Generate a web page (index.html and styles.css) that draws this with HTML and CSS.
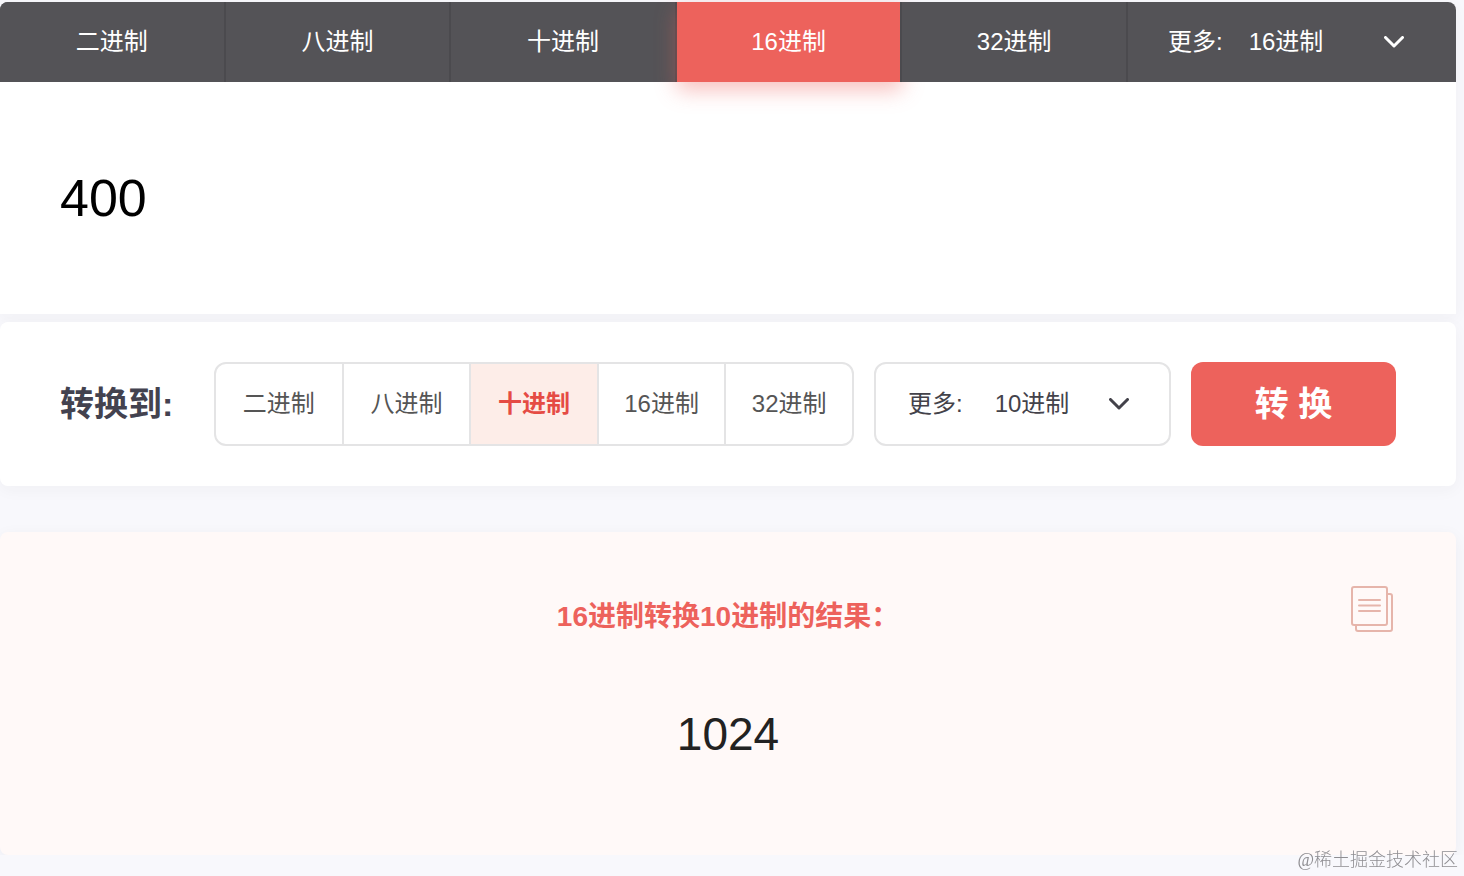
FILE: index.html
```
<!DOCTYPE html>
<html lang="zh-CN">
  <head>
    <meta charset="UTF-8" />
    <meta name="viewport" content="width=device-width, initial-scale=1.0" />
    <title>进制转换</title>

    <link rel="stylesheet" href="styles.css">
  </head>
  <body>
    <main class="container">
      <section class="source">
        <div class="tabs">
          <button type="button" class="tab">二进制</button>
          <button type="button" class="tab">八进制</button>
          <button type="button" class="tab">十进制</button>
          <button type="button" class="tab active">16进制</button>
          <button type="button" class="tab">32进制</button>
          <div class="tabs-more">
            <label for="from-base">更多:</label>
            <div class="select">
              <select id="from-base">
                <option>16进制</option>
              </select>
              <svg class="arrow" viewBox="0 0 20 12"><path d="M1.5 1.5 10 10l8.500-8.500" /></svg>
            </div>
          </div>
        </div>
        <input type="text" class="number" value="400" aria-label="数值" />
      </section>

      <section class="convert">
        <h2>转换到:</h2>
        <div class="bases">
          <button type="button" class="base">二进制</button>
          <button type="button" class="base">八进制</button>
          <button type="button" class="base active">十进制</button>
          <button type="button" class="base">16进制</button>
          <button type="button" class="base">32进制</button>
        </div>
        <div class="more">
          <label for="to-base">更多:</label>
          <div class="select">
            <select id="to-base">
              <option>10进制</option>
            </select>
            <svg class="arrow" viewBox="0 0 20 12"><path d="M1.5 1.5 10 10l8.500-8.500" /></svg>
          </div>
        </div>
        <button type="button" class="btn">转 换</button>
      </section>

      <section class="result">
        <div class="result-head">
          <h3>16进制转换10进制的结果：</h3>
          <button type="button" class="copy" aria-label="复制">
            <svg viewBox="0 0 42 46">
              <rect x="1" y="1" width="35" height="38" rx="2" />
              <path d="M36 8h3a2 2 0 0 1 2 2v33a2 2 0 0 1-2 2H7a2 2 0 0 1-2-2v-4" />
              <path d="M8 14h21M8 19.500h21M8 25h21" />
            </svg>
          </button>
        </div>
        <p class="value">1024</p>
      </section>
    </main>

    <div class="watermark">@稀土掘金技术社区</div>
  </body>
</html>
```
FILE: styles.css
```
* {
  box-sizing: border-box;
}

:root {
  --main-color: #ed625c;
  --dark: #545357;
  --body-bg: #f8f8fc;
  --border-color: #e4e4e5;
  --text-color: #555;
}

body {
  margin: 0;
  background: var(--body-bg);
  color: var(--text-color);
  font-family: "Liberation Sans", "Noto Sans CJK SC", sans-serif;
  font-size: 24px;
  line-height: 36px;
}

button,
input,
select {
  margin: 0;
  padding: 0;
  border: none;
  background: none;
  color: inherit;
  font: inherit;
}

button,
select {
  cursor: pointer;
}

h2,
h3,
p {
  margin: 0;
}

.container {
  padding: 2px 8px 0 0;
}

.source {
  background: #fff;
  border-radius: 8px 8px 0 0;
  box-shadow: 0 4px 16px rgba(40, 40, 60, 0.04);
}

.tabs {
  display: flex;
  height: 80px;
  background: var(--dark);
  border-radius: 8px 8px 0 0;
  color: #fff;
}

.tab {
  flex: 1;
  border-right: 2px solid #4b4a4e;
  background: var(--dark);
}

.tab:first-child {
  border-top-left-radius: 8px;
}

.tab.active {
  background: var(--main-color);
  box-shadow: 0 8px 20px rgba(237, 98, 92, 0.4);
}

.tabs-more {
  display: flex;
  align-items: center;
  gap: 26px;
  width: 328px;
  padding: 0 52px 0 40px;
}

.select {
  position: relative;
  display: flex;
  flex: 1;
}

.select select {
  width: 100%;
  height: 36px;
  appearance: none;
  outline: none;
}

.arrow {
  position: absolute;
  top: 50%;
  right: 0;
  width: 20px;
  height: 12px;
  margin-top: -6px;
  fill: none;
  stroke: currentColor;
  stroke-width: 3;
  stroke-linecap: round;
  stroke-linejoin: round;
  pointer-events: none;
}

.number {
  display: block;
  width: 100%;
  height: 232px;
  padding: 0 60px;
  color: #000;
  font-size: 52px;
  outline: none;
}

.convert {
  display: flex;
  align-items: center;
  gap: 20px;
  margin-top: 8px;
  padding: 40px 60px;
  background: #fff;
  border-radius: 8px;
  box-shadow: 0 4px 16px rgba(40, 40, 60, 0.04);
}

.convert h2 {
  width: 134px;
  color: #43424f;
  font-size: 34px;
  white-space: nowrap;
}

.bases {
  display: flex;
  flex: 1;
  height: 84px;
  border: 2px solid var(--border-color);
  border-radius: 12px;
  overflow: hidden;
}

.base {
  flex: 1;
  border-right: 2px solid var(--border-color);
}

.base:last-child {
  border-right: none;
}

.base.active {
  background: #fdede8;
  color: #e54b44;
  font-weight: bold;
}

.more {
  display: flex;
  align-items: center;
  gap: 32px;
  width: 297px;
  height: 84px;
  padding: 0 40px 0 32px;
  border: 2px solid var(--border-color);
  border-radius: 12px;
  color: #43424a;
}

.btn {
  width: 205px;
  height: 84px;
  border-radius: 12px;
  background: var(--main-color);
  color: #fff;
  font-size: 34px;
  font-weight: bold;
}

.result {
  margin-top: 46px;
  padding: 54px 63px 91px;
  background: #fff9f8;
  border-radius: 8px;
  box-shadow: 0 4px 16px rgba(40, 40, 60, 0.05);
  text-align: center;
}

.result-head {
  display: flex;
  padding-left: 42px;
}

.result-head h3 {
  flex: 1;
  color: var(--main-color);
  font-size: 28px;
  line-height: 62px;
}

.copy {
  width: 42px;
  height: 46px;
}

.copy svg {
  display: block;
  fill: none;
  stroke: #e6b5ab;
  stroke-width: 2;
  stroke-linecap: round;
}

.value {
  margin-top: 56px;
  color: #222;
  font-size: 46px;
  line-height: 60px;
}

.watermark {
  position: fixed;
  right: 6px;
  bottom: 4px;
  color: #8f8e92;
  font-family: "Liberation Serif", "Noto Sans CJK SC", serif;
  font-size: 18px;
  font-weight: 300;
  line-height: 24px;
}
```
